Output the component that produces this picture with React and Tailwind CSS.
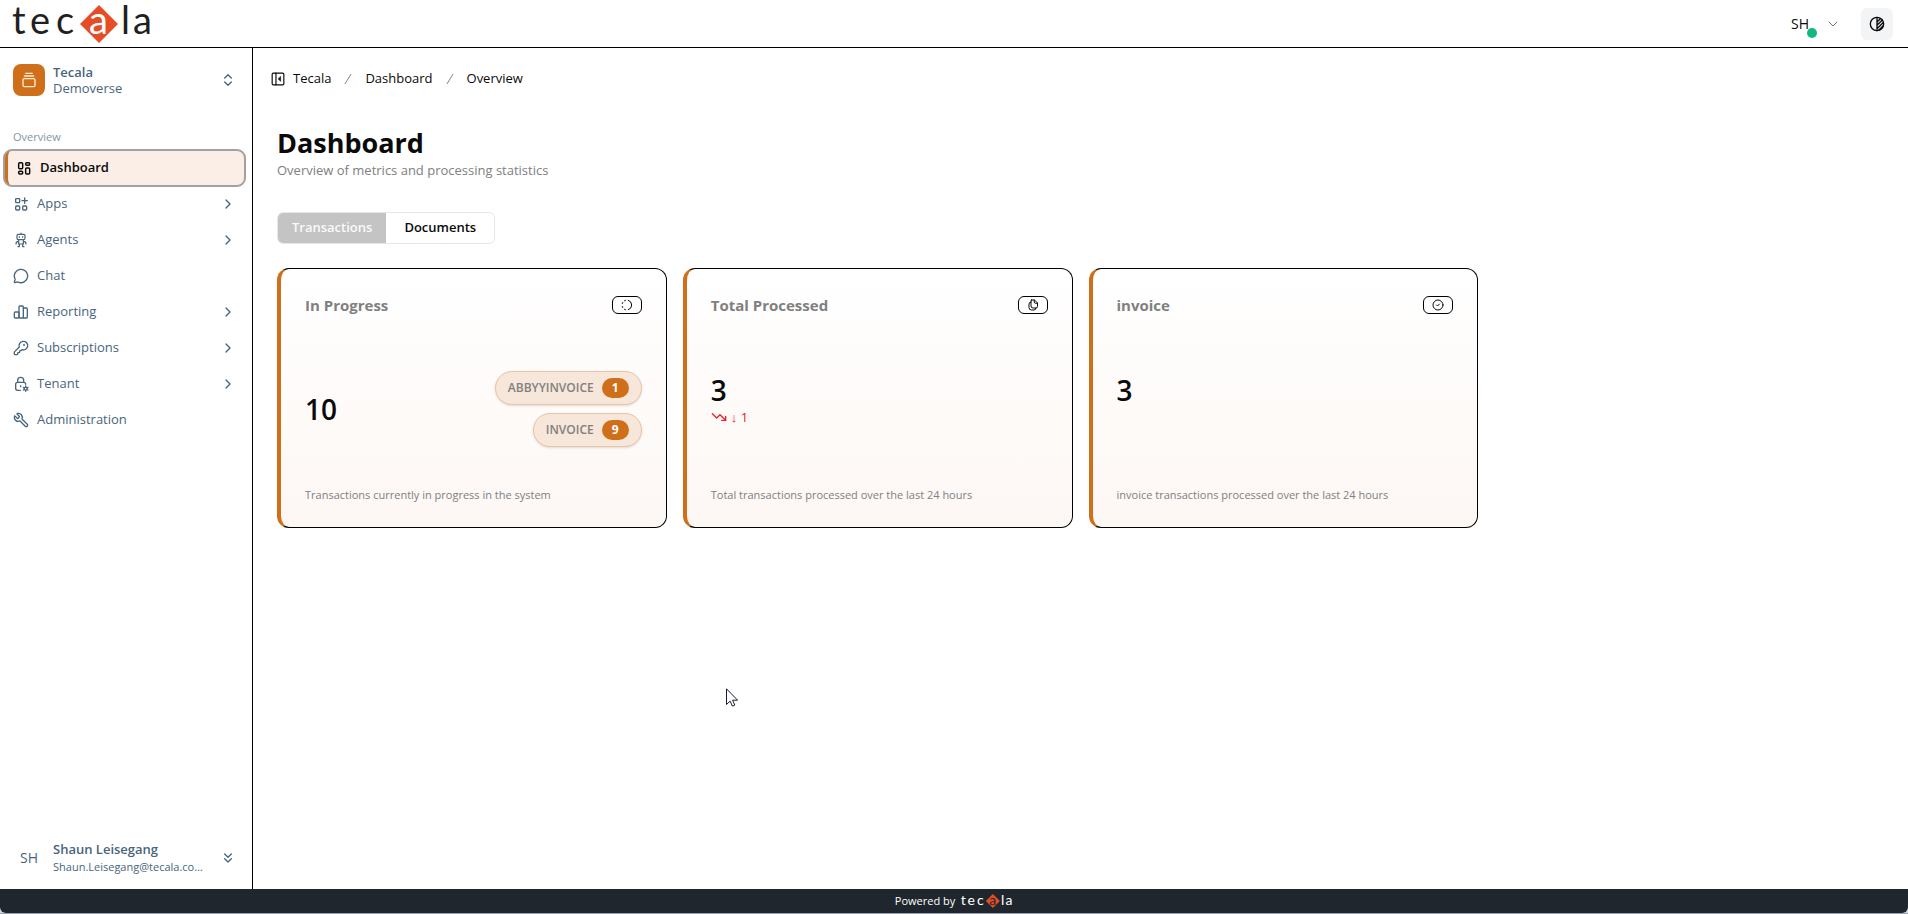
import { useState } from "react";
import {
  ChevronDown,
  ChevronRight,
  ChevronsDown,
  ChevronsUpDown,
  CircleCheck,
  GalleryVerticalEnd,
  KeyRound,
  MessageCircle,
  TrendingDown,
  Wrench,
} from "lucide-react";

// Base wrapper for the icons that lucide does not ship
function Icon({ className, children, strokeWidth = 2 }) {
  return (
    <svg
      viewBox="0 0 24 24"
      fill="none"
      stroke="currentColor"
      strokeWidth={strokeWidth}
      strokeLinecap="round"
      strokeLinejoin="round"
      aria-hidden="true"
      className={className}
    >
      {children}
    </svg>
  );
}

function DashboardIcon({ className }) {
  return (
    <Icon className={className} strokeWidth={2.2}>
      <rect x="4" y="4" width="6" height="9" rx="1.500" />
      <rect x="14.500" y="4" width="6" height="4" rx="1.500" />
      <rect x="4" y="17" width="6" height="4" rx="1.500" />
      <rect x="14.500" y="12" width="6" height="9" rx="1.500" />
    </Icon>
  );
}

function AppsIcon({ className }) {
  return (
    <Icon className={className}>
      <rect x="4" y="4" width="6" height="6" rx="1" />
      <rect x="4" y="15" width="6" height="6" rx="1.500" />
      <rect x="14.500" y="15" width="6" height="6" rx="1.500" />
      <path d="M17.500 3v8M13.500 7h8" />
    </Icon>
  );
}

function AgentsIcon({ className }) {
  return (
    <Icon className={className} strokeWidth={1.8}>
      <path d="M12 1.500v2" />
      <rect x="6" y="3.500" width="12" height="8" rx="2" />
      <path d="M9.500 7v1M14.500 7v1" />
      <path d="M8.500 11.500v6.500h7v-6.500M8.500 14c-3 0-4 1-4 4M15.500 14c3 0 4 1 4 4" />
      <path d="M9.500 18v4H7.500M14.500 18v4h2" />
    </Icon>
  );
}

function ReportingIcon({ className }) {
  return (
    <Icon className={className}>
      <rect x="2" y="12" width="7" height="9" rx="1.500" />
      <rect x="9" y="3" width="6.500" height="18" rx="1.500" />
      <path d="M15.500 6H20a1.500 1.500 0 0 1 1.500 1.500v12A1.500 1.500 0 0 1 20 21h-4.500" />
    </Icon>
  );
}

function TenantIcon({ className }) {
  return (
    <Icon className={className}>
      <path d="M7 9.500V6.500a4.500 4.500 0 0 1 9 0v3" />
      <path d="M11 21.500H7a3 3 0 0 1-3-3v-6a3 3 0 0 1 3-3h9a3 3 0 0 1 3 3" />
      <path d="M11.500 14.500v1.500" />
      <circle cx="19" cy="19" r="2.200" />
      <path d="M19 15v1.500M19 21.500v1.500M15.500 17l1.300.700M21.200 20.300l1.300.700M15.500 21l1.300-.700M21.200 17.700l1.300-.700" />
    </Icon>
  );
}

function SidebarToggleIcon({ className }) {
  return (
    <Icon className={className}>
      <rect x="2" y="2" width="20" height="20" rx="2" />
      <path d="M8.500 2v20" />
      <path d="M16.500 8v8l-4-4z" fill="currentColor" strokeWidth="1" />
    </Icon>
  );
}

function ContrastIcon({ className }) {
  return (
    <Icon className={className}>
      <circle cx="12" cy="12" r="10" />
      <path d="M12 2v20M12 9l5-5M12 14l8-8M12 19l9-9M15 21l6-6" />
    </Icon>
  );
}

function ProgressIcon({ className }) {
  return (
    <Icon className={className}>
      <path d="M14.500 2.500A10 10 0 0 1 14.500 21.500" />
      <path d="M9 2.500a10 10 0 0 0-2 1M3.500 7a10 10 0 0 0-1 2M2.500 15a10 10 0 0 0 1 2M7 20.500a10 10 0 0 0 2 1" />
    </Icon>
  );
}

function DocumentsIcon({ className }) {
  return (
    <Icon className={className}>
      <path d="M9 2h6l6 6v7a3 3 0 0 1-3 3h-6a4 4 0 0 1-4-4V3a1 1 0 0 1 1-1Z" />
      <path d="M14.500 2v4a2.500 2.500 0 0 0 2.500 2.500h4" />
      <path d="M8 6a4 4 0 0 0-4 4v7a5 5 0 0 0 5 5h5a4 4 0 0 0 4-4" />
    </Icon>
  );
}

function TecalaLogo({ className, insetClass = "fill-white" }) {
  return (
    <svg viewBox="0 0 140 38" role="img" aria-label="tecala" className={`overflow-visible ${className}`}>
      <path d="M86 0 105 19 86 38 67 19Z" fill="#e44d26" />
      <g fontSize="38" className="font-['Lato']" fill="currentColor">
        <text x="-1" y="28.500">t</text>
        <text x="17" y="28.500">e</text>
        <text x="43" y="28.500">c</text>
        <text x="76" y="28.500" className={insetClass}>a</text>
        <text x="108" y="28.500">l</text>
        <text x="120" y="28.500">a</text>
      </g>
    </svg>
  );
}

const navItems = [
  { label: "Apps", icon: AppsIcon, expandable: true },
  { label: "Agents", icon: AgentsIcon, expandable: true },
  { label: "Chat", icon: MessageCircle },
  { label: "Reporting", icon: ReportingIcon, expandable: true },
  { label: "Subscriptions", icon: KeyRound, expandable: true },
  { label: "Tenant", icon: TenantIcon, expandable: true },
  { label: "Administration", icon: Wrench, iconClass: "-scale-x-100" },
];

function Sidebar() {
  return (
    <aside className="flex w-[253px] shrink-0 flex-col border-r border-black text-[#48657c]">
      <button className="mt-4 flex items-center gap-2 pr-4 pl-[13px] text-left text-[13px] leading-4">
        <span className="flex size-8 items-center justify-center rounded-lg bg-[#cf6f1a] text-orange-100">
          <GalleryVerticalEnd className="size-4" />
        </span>
        <span className="flex-1">
          <span className="block font-semibold">Tecala</span>
          <span className="block">Demoverse</span>
        </span>
        <ChevronsUpDown className="size-4" />
      </button>

      <nav className="mt-[33px] pr-[7px] pl-1">
        <h2 className="mb-[5px] px-[9px] text-[11px] leading-4 font-medium text-[#8296a6]">Overview</h2>
        <a
          href="#dashboard"
          className="flex h-9 items-center gap-2 rounded-lg border-l-4 border-[#cf6f1a] bg-[#faeee6] pl-2 text-[13px] font-semibold text-[#0a0a0a] outline-2 -outline-offset-1 outline-[#a1a1a1]"
        >
          <DashboardIcon className="size-4" />
          Dashboard
        </a>
        {navItems.map((item) => (
          <a key={item.label} href="#" className="flex h-9 items-center gap-2 px-[9px] text-[13px]">
            <item.icon className={`size-4 ${item.iconClass || ""}`} />
            <span className="flex-1">{item.label}</span>
            {item.expandable && <ChevronRight className="size-4" />}
          </a>
        ))}
      </nav>

      <button className="mt-auto mb-[13px] flex items-center gap-2 pr-4 pl-[13px] text-left">
        <span className="w-8 text-center text-sm">SH</span>
        <span className="min-w-0 flex-1">
          <span className="block text-[13px] leading-[18px] font-semibold">Shaun Leisegang</span>
          <span className="block w-[156px] truncate text-[11px] leading-[18px]">Shaun.Leisegang@tecala.com.au</span>
        </span>
        <ChevronsDown className="size-4" />
      </button>
    </aside>
  );
}

function Slash() {
  return (
    <Icon className="size-[14px] text-gray-500" strokeWidth={1.5}>
      <path d="M17 4 7 20" />
    </Icon>
  );
}

function StatCard({ title, icon: BadgeIcon, value, description, change, breakdown }) {
  return (
    <section className="flex flex-col rounded-xl border border-l-4 border-black border-l-[#cf6f1a] bg-linear-to-b from-white to-[#fdf7f4] p-6">
      <div className="flex items-center justify-between">
        <h2 className="text-[15px] leading-6 font-bold text-[#808080]">{title}</h2>
        <span className="flex h-[18px] w-[30px] items-center justify-center rounded-md border border-black bg-white text-[#0a0a0a]">
          <BadgeIcon className="size-3" />
        </span>
      </div>
      <div className={`mt-[54px] mb-10 flex min-h-[76px] justify-between ${breakdown ? "items-center" : "items-start"}`}>
        <div>
          <p className="text-[28px] leading-[38px] font-semibold text-[#0a0a0a]">{value}</p>
          {change && (
            <p className="flex items-center gap-1 text-[13px] leading-4 text-[#e7222b]">
              <TrendingDown className="size-4" />
              <span>↓ {change}</span>
            </p>
          )}
        </div>
        {breakdown && (
          <ul className="flex flex-col items-end gap-2">
            {breakdown.map((entry) => (
              <li
                key={entry.name}
                className="flex h-[34px] items-center gap-2 rounded-full border border-[#ecc4a1] bg-[#f7e7da] px-3 text-xs font-semibold text-[#808080] shadow-sm"
              >
                {entry.name}
                <span className="flex h-5 w-[27px] items-center justify-center rounded-full bg-[#cf6f1a] font-bold text-white">
                  {entry.count}
                </span>
              </li>
            ))}
          </ul>
        )}
      </div>
      <p className="text-[11px] leading-4 text-[#808080]">{description}</p>
    </section>
  );
}

function Tab({ active, onClick, children }) {
  return (
    <button
      role="tab"
      aria-selected={active}
      onClick={onClick}
      className={`text-[13px] font-semibold ${active ? "bg-[#c4c4c4] px-[14px] text-gray-50" : "px-[18px] text-[#0a0a0a]"}`}
    >
      {children}
    </button>
  );
}

export default function App() {
  const [tab, setTab] = useState("transactions");

  return (
    <div className="flex min-h-screen flex-col bg-white font-['Open_Sans',sans-serif] text-[#0a0a0a]">
      <header className="flex h-12 items-center justify-between border-b border-black pr-[15px] pl-[13px]">
        <a href="#">
          <TecalaLogo className="h-[38px] w-[140px] text-[#231f20]" />
        </a>
        <div className="flex items-center gap-5">
          <button className="flex items-center gap-4 text-sm font-medium">
            <span className="relative">
              SH
              <span className="absolute -right-2 -bottom-1 size-[10px] rounded-full bg-[#10b981]" />
            </span>
            <ChevronDown className="size-4 text-gray-500" strokeWidth={1.5} />
          </button>
          <button aria-label="Toggle theme" className="flex size-8 items-center justify-center rounded-md bg-gray-100">
            <ContrastIcon className="size-4" />
          </button>
        </div>
      </header>

      <div className="flex flex-1">
        <Sidebar />
        <main className="min-w-0 flex-1">
          <nav aria-label="Breadcrumb" className="flex h-[61px] items-center gap-2 pl-[18px] text-[13px]">
            <button aria-label="Toggle sidebar">
              <SidebarToggleIcon className="size-[14px]" />
            </button>
            <div className="flex items-center gap-[10px]">
              <a href="#">Tecala</a>
              <Slash />
              <a href="#">Dashboard</a>
              <Slash />
              <span>Overview</span>
            </div>
          </nav>

          <div className="px-6 pt-4">
            <h1 className="text-[27px] leading-9 font-bold">Dashboard</h1>
            <p className="text-[13px] leading-[18px] text-[#808080]">Overview of metrics and processing statistics</p>

            <div role="tablist" className="mt-[33px] flex h-8 w-fit overflow-hidden rounded-md border border-gray-200">
              <Tab active={tab === "transactions"} onClick={() => setTab("transactions")}>
                Transactions
              </Tab>
              <Tab active={tab === "documents"} onClick={() => setTab("documents")}>
                Documents
              </Tab>
            </div>

            <div className="mt-6 grid grid-cols-4 gap-4">
              <StatCard
                title="In Progress"
                icon={ProgressIcon}
                value="10"
                description="Transactions currently in progress in the system"
                breakdown={[
                  { name: "ABBYYINVOICE", count: 1 },
                  { name: "INVOICE", count: 9 },
                ]}
              />
              <StatCard
                title="Total Processed"
                icon={DocumentsIcon}
                value="3"
                change={1}
                description="Total transactions processed over the last 24 hours"
              />
              <StatCard
                title="invoice"
                icon={CircleCheck}
                value="3"
                description="invoice transactions processed over the last 24 hours"
              />
            </div>
          </div>
        </main>
      </div>

      <footer className="border-b border-gray-400 bg-gray-300">
        <div className="flex h-6 items-center justify-center gap-[6px] rounded-b-md bg-[#1f262d] text-[11px] text-white">
          Powered by
          <TecalaLogo className="h-[14px] w-[52px]" insetClass="fill-[#1f262d]" />
        </div>
      </footer>

      {/* mouse pointer */}
      <svg
        viewBox="0 0 12 19"
        aria-hidden="true"
        className="pointer-events-none absolute top-[688px] left-[726px] h-[19px] w-3"
      >
        <path d="M.5.800v15.700l3.600-3.400 2.300 5 2.400-1-2.200-4.900h5z" fill="#fff" stroke="#1a1a2e" />
      </svg>
    </div>
  );
}
